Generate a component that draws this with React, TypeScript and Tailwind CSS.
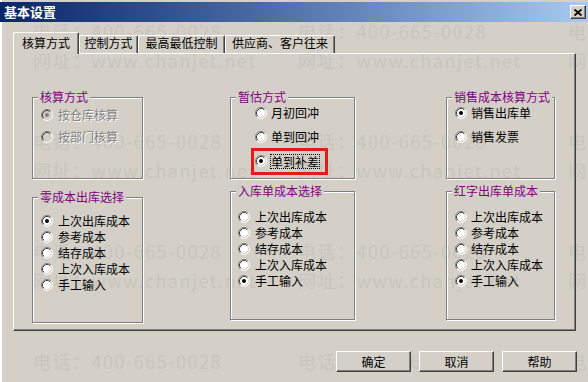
import React from 'react';

const cjk = "font-['Noto_Sans_CJK_SC','Liberation_Sans',sans-serif]";

const RadioMark = ({ checked = false, disabled = false }: { checked?: boolean; disabled?: boolean }) => (
  <svg width="12" height="12" viewBox="0 0 12 12" className="shrink-0">
    <circle cx="6" cy="6" r="5" fill={disabled ? '#d4d0c8' : '#ffffff'} />
    <path d="M2.11 9.89 A5.5 5.5 0 0 1 9.89 2.11" fill="none" stroke="#808080" />
    <path d="M9.89 2.11 A5.5 5.5 0 0 1 2.11 9.89" fill="none" stroke="#ffffff" />
    <path d="M2.82 9.18 A4.5 4.5 0 0 1 9.18 2.82" fill="none" stroke="#404040" />
    <path d="M9.18 2.82 A4.5 4.5 0 0 1 2.82 9.18" fill="none" stroke="#d4d0c8" />
    {checked && <circle cx="6" cy="6" r="2" fill={disabled ? '#808080' : '#000000'} />}
  </svg>
);

type RadioProps = {
  label: string;
  checked?: boolean;
  disabled?: boolean;
  rowClass: string;
  gapClass: string;
};

const Radio = ({ label, checked, disabled, rowClass, gapClass }: RadioProps) => (
  <div className={`flex items-center ${rowClass} ${gapClass}`}>
    <RadioMark checked={checked} disabled={disabled} />
    <span
      className={`text-[12px] leading-[14px] ${
        disabled ? 'text-[#808080] [text-shadow:1px_1px_0_#ffffff]' : 'text-black'
      }`}
    >
      {label}
    </span>
  </div>
);

const GroupBox = ({
  title,
  className,
  children,
}: {
  title: string;
  className: string;
  children: React.ReactNode;
}) => (
  <div
    className={`relative border border-[#808080] shadow-[inset_1px_1px_0_#ffffff,1px_1px_0_#ffffff] ${className}`}
  >
    {/* legend sits on the etched line */}
    <span className="absolute -top-[8px] left-[5px] bg-[#d4d0c8] px-[2px] text-[12px] leading-[14px] text-[#800080]">
      {title}
    </span>
    {children}
  </div>
);

const costOptions = ['上次出库成本', '参考成本', '结存成本', '上次入库成本', '手工输入'];

const Watermark = () => {
  const marks: { x: number; y: number; t: string }[] = [];
  for (let r = 0; r < 4; r++) {
    for (const x of [33, 298, 568]) {
      marks.push({ x, y: 21 + 110 * r, t: '电话：400-665-0028' });
      marks.push({ x, y: 50 + 110 * r, t: '网址：www.chanjet.net' });
    }
  }
  return (
    <div className="pointer-events-none absolute inset-0 z-0">
      {marks.map((m, i) => (
        <span
          key={i}
          className="absolute whitespace-nowrap text-[18px] leading-[20px] tracking-[1.5px] text-[#c9c5bd]"
          style={{ left: m.x, top: m.y }}
        >
          {m.t}
        </span>
      ))}
    </div>
  );
};

const Button = ({ label }: { label: string }) => (
  <button className="flex h-[21px] w-[75px] items-center justify-center border border-t-white border-l-white border-r-[#404040] border-b-[#404040] bg-[#d4d0c8] text-[12px] leading-[14px] text-black shadow-[inset_-1px_-1px_0_#808080]">
    {label}
  </button>
);

export default function App() {
  return (
    <div
      className={`relative h-[382px] w-[588px] overflow-hidden bg-[#d4d0c8] pt-[2px] shadow-[inset_2px_0_0_#ffffff] ${cjk}`}
    >
      <Watermark />

      {/* Title bar */}
      <div className="relative z-10 flex h-[20px] items-center justify-between bg-gradient-to-r from-[#0a246a] to-[#a6caf0] pl-[4px] pr-[2px]">
        <span className="text-[13px] font-bold leading-[16px] text-white">基本设置</span>
        <button className="flex h-[14px] w-[16px] items-center justify-center border border-t-white border-l-white border-r-[#404040] border-b-[#404040] bg-[#d4d0c8] shadow-[inset_-1px_-1px_0_#808080]">
          <svg width="8" height="7" viewBox="0 0 8 7">
            <path d="M0.5 0.5 L7.5 6.5 M7.5 0.5 L0.5 6.5" stroke="#000" strokeWidth="1.8" />
          </svg>
        </button>
      </div>

      {/* Tabs */}
      <div className="relative z-10 mt-[10px] flex h-[21px] items-end pl-[13px]">
        <div className="relative z-20 -mb-px flex h-[22px] w-[66px] justify-center rounded-t-[2px] border-t border-l border-r border-t-white border-l-white border-r-[#404040] bg-[#d4d0c8] pt-[3px] text-[12px] leading-[14px] text-black shadow-[inset_-1px_0_0_#808080]">
          核算方式
        </div>
        {[
          ['控制方式', 'w-[59px]'],
          ['最高最低控制', 'w-[87px]'],
          ['供应商、客户往来', 'w-[110px]'],
        ].map(([t, w]) => (
          <div
            key={t}
            className={`flex h-[18px] ${w} justify-center rounded-t-[2px] border-t border-l border-r border-t-white border-l-white border-r-[#404040] bg-[#d4d0c8] text-[12px] leading-[14px] text-black shadow-[inset_-1px_0_0_#808080]`}
          >
            {t}
          </div>
        ))}
      </div>

      {/* Tab page */}
      <div className="relative z-[5] ml-[13px] flex h-[278px] w-[563px] items-start border border-t-white border-l-white border-r-[#404040] border-b-[#404040] pt-[43px] shadow-[inset_-1px_-1px_0_#808080]">
        {/* left column */}
        <div className="ml-[18px] flex w-[111px] flex-col">
          <GroupBox title="核算方式" className="h-[82px] pt-[6px] pl-[8px]">
            <Radio label="按仓库核算" checked disabled rowClass="h-[22px]" gapClass="gap-[5px]" />
            <Radio label="按部门核算" disabled rowClass="h-[22px]" gapClass="gap-[5px]" />
          </GroupBox>
          <GroupBox title="零成本出库选择" className="mt-[18px] h-[126px] pt-[15px] pl-[8px]">
            {costOptions.map((o, i) => (
              <Radio key={o} label={o} checked={i === 0} rowClass="h-[16px]" gapClass="gap-[5px]" />
            ))}
          </GroupBox>
        </div>

        {/* middle column */}
        <div className="ml-[87px] flex w-[125px] flex-col">
          <GroupBox title="暂估方式" className="h-[82px] pt-[3px] pl-[24px]">
            <Radio label="月初回冲" rowClass="h-[24px]" gapClass="gap-[4px]" />
            <Radio label="单到回冲" rowClass="h-[24px]" gapClass="gap-[4px]" />
            <div className="relative flex h-[24px] items-center gap-[3px]">
              <RadioMark checked />
              <span className="border border-dotted border-black text-[12px] leading-[13px] text-black">
                单到补差
              </span>
              {/* red highlight around the selected option */}
              <span className="absolute -left-[4px] -top-[1px] h-[27px] w-[77px] border-[3px] border-[#e41b17]" />
            </div>
          </GroupBox>
          <GroupBox title="入库单成本选择" className="mt-[12px] h-[129px] pt-[17px] pl-[7px]">
            {costOptions.map((o, i) => (
              <Radio key={o} label={o} checked={i === 4} rowClass="h-[16px]" gapClass="gap-[5px]" />
            ))}
          </GroupBox>
        </div>

        {/* right column */}
        <div className="ml-[91px] flex w-[109px] flex-col">
          <GroupBox title="销售成本核算方式" className="h-[82px] pt-[3px] pl-[8px]">
            <Radio label="销售出库单" checked rowClass="h-[24px]" gapClass="gap-[4px]" />
            <Radio label="销售发票" rowClass="h-[24px]" gapClass="gap-[4px]" />
          </GroupBox>
          <GroupBox title="红字出库单成本" className="mt-[12px] h-[129px] pt-[17px] pl-[8px]">
            {costOptions.map((o, i) => (
              <Radio key={o} label={o} checked={i === 4} rowClass="h-[16px]" gapClass="gap-[4px]" />
            ))}
          </GroupBox>
        </div>
      </div>

      {/* Dialog buttons */}
      <div className="relative z-10 mt-[20px] flex justify-end gap-[8px] pr-[11px]">
        <Button label="确定" />
        <Button label="取消" />
        <Button label="帮助" />
      </div>
    </div>
  );
}
